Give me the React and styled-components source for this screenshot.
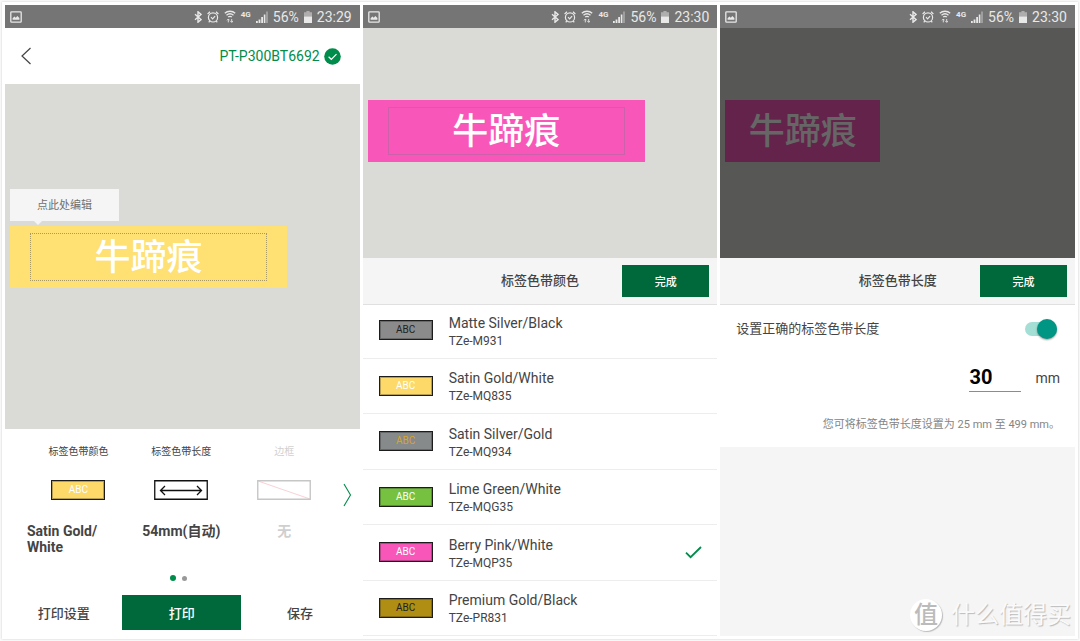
import React, { useState } from 'react';
import styled, { createGlobalStyle, css } from 'styled-components';

const colors = {
  green: '#00693c',
  accent: '#008c4a',
  teal: '#009683',
  canvas: '#dadbd6',
  surface: '#f5f5f5',
  text: '#444',
};

const GlobalStyle = createGlobalStyle`
  *,
  *::before,
  *::after {
    box-sizing: border-box;
  }

  body {
    margin: 0;
    background: #fafafa;
    color: ${colors.text};
    font-family: Roboto, 'Noto Sans CJK SC', sans-serif;
    font-size: 14px;
  }

  button,
  input {
    margin: 0;
    padding: 0;
    border: 0;
    border-radius: 0;
    background: none;
    color: inherit;
    font: inherit;
  }

  button {
    cursor: pointer;
  }

  svg {
    display: block;
    flex: none;
  }
`;

const Page = styled.main`
  display: flex;
  min-height: 100vh;
  padding: 2px;
`;

const Frame = styled.div`
  position: relative;
  display: grid;
  flex: 1;
  grid-template-columns: repeat(3, minmax(0, 1fr));
  gap: 3px;
  padding: 3px;
  background: #fff;
  box-shadow: 0 0 2px #ccc;
`;

const Screen = styled.section`
  display: flex;
  flex-direction: column;
  background: ${props => (props.$muted ? colors.surface : '#fff')};
`;

/* Status bar */

const StatusRow = styled.header`
  display: flex;
  align-items: center;
  justify-content: space-between;
  height: 23px;
  padding: 0 8px 0 5px;
  background: #757575;
  color: #e8e8e8;
`;

const StatusGroup = styled.div`
  display: flex;
  align-items: center;
  gap: 5px;
  line-height: 22px;
`;

const Network = styled.span`
  align-self: flex-start;
  font-size: 8px;
  font-weight: 700;
  line-height: 18px;
`;

const StatusBar = ({ time }) => (
  <StatusRow>
    <svg width="12" height="12" viewBox="0 0 12 12" fill="none" stroke="currentColor">
      <rect x="0.8" y="0.8" width="10.4" height="10.4" rx="0.8" strokeWidth="1.3" />
      <path d="M2.6 8.8V7.2L4.4 5.4l1.4 1.3 1.5-1.7 2.1 2v1.8z" fill="currentColor" stroke="none" />
    </svg>
    <StatusGroup>
      <svg width="8" height="12" viewBox="0 0 8 12" fill="none" stroke="currentColor" strokeWidth="1.4">
        <path d="M1 3.2l6 5.4L4 11.2V0.8l3 2.6L1 8.8" />
      </svg>
      <svg width="12" height="12" viewBox="0 0 12 12" fill="none" stroke="currentColor" strokeWidth="1.2">
        <circle cx="6" cy="6.4" r="4.6" />
        <path d="M4 6.2l1.6 1.6 2.5-2.6M0.6 3L3 0.8M11.4 3L9 0.8M2.8 9.8L1.8 11.4M9.2 9.8l1 1.6" />
      </svg>
      <svg width="12" height="13" viewBox="1 0 12 13" fill="none" stroke="currentColor" strokeWidth="1.3">
        <path d="M1.8 3.2C4.6 0.6 9.4 0.6 12.2 3.2M3.5 5.2c2-1.7 5-1.7 7 0M5.2 7.1c1.1-0.9 2.5-0.9 3.6 0" />
        <path d="M5.3 12.4V9.2M4 10.3l1.3-1.3M8.7 9v3.2M10 11.1l-1.3 1.3M7.4 11.1l1.3 1.3M5.3 9l1.2 1.3" strokeWidth="0.9" />
      </svg>
      <Network>4G</Network>
      <svg width="12" height="12" viewBox="0 0 12 12" fill="currentColor">
        <path d="M0 10h1.8v2H0zM2.6 8.4h1.8V12H2.6zM5.2 6H7v6H5.2zM7.8 3.4h1.6V12H7.8z" />
        <path d="M10.2 0.6h1.6V12h-1.6z" opacity="0.45" />
      </svg>
      <span>56%</span>
      <svg width="8" height="12" viewBox="0 0 8 12" fill="currentColor">
        <path d="M2.4 0h3.2v1.2H8V5.4H0V1.2h2.4z" opacity="0.5" />
        <path d="M0 5.4h8V12H0z" />
      </svg>
      <span>{time}</span>
    </StatusGroup>
  </StatusRow>
);

/* Label preview */

const Canvas = styled.div`
  position: relative;
  display: flex;
  padding: 0 5px;
  background: ${colors.canvas};

  ${props =>
    props.$grow
      ? css`
          flex: 1;
          align-items: center;
        `
      : css`
          height: 230px;
          padding-top: 72px;
        `}

  ${props =>
    props.$dimmed &&
    css`
      &::after {
        content: '';
        position: absolute;
        inset: 0;
        background: rgba(0, 0, 0, 0.6);
      }
    `}
`;

const Tape = styled.div`
  position: relative;
  width: ${props => (props.$short ? 155 : 277)}px;
  height: 62px;
  padding: 7px 20px;
  background: ${props => props.$color};
`;

const TapeText = styled.div`
  height: 48px;
  border: 1px ${props => props.$outline};
  color: #fff;
  font-size: 36px;
  font-weight: 500;
  line-height: 48px;
  text-align: center;
  white-space: nowrap;
`;

const EditHint = styled.div`
  position: absolute;
  bottom: 100%;
  left: 0;
  width: 109px;
  height: 32px;
  margin-bottom: 5px;
  background: ${colors.surface};
  color: #707070;
  font-size: 11px;
  line-height: 34px;
  text-align: center;

  &::after {
    content: '';
    position: absolute;
    top: 100%;
    left: 24px;
    border: 4px solid transparent;
    border-top-color: ${colors.surface};
    border-bottom: 0;
  }
`;

/* Editor screen */

const EditorHeader = styled.div`
  display: flex;
  align-items: center;
  justify-content: space-between;
  height: 56px;
  padding: 0 19px 0 15px;
`;

const Printer = styled.div`
  display: flex;
  align-items: center;
  gap: 4px;
  color: ${colors.accent};
`;

const Controls = styled.div`
  display: flex;
  flex-direction: column;
  padding: 16px 0 6px;
`;

const Carousel = styled.div`
  display: flex;
  padding: 0 8px 0 22px;
`;

const Option = styled.button`
  display: flex;
  flex: 1;
  flex-direction: column;
  align-items: center;
  opacity: ${props => (props.disabled ? 0.25 : 1)};
`;

const OptionLabel = styled.span`
  margin-bottom: 21px;
  font-size: 10px;
  line-height: 14px;
`;

const OptionValue = styled.span`
  align-self: stretch;
  min-height: 32px;
  margin-top: 23px;
  font-weight: 700;
  line-height: 16px;
  text-align: ${props => (props.$left ? 'left' : 'center')};
`;

const NextButton = styled.button`
  display: flex;
  flex: none;
  align-items: center;
  justify-content: flex-end;
  width: 16px;
  height: 100px;
`;

const Swatch = styled.span`
  flex: none;
  width: 54px;
  border: 1px solid #1c1c1c;
  outline: 1px solid rgba(28, 28, 28, 0.3);
  outline-offset: -2px;
  background: ${props => props.$background};
  color: ${props => props.$color};
  font-size: 10px;
  line-height: 18px;
  text-align: center;
`;

const Dots = styled.div`
  display: flex;
  align-items: center;
  justify-content: center;
  gap: 6px;
  height: 6px;
  margin: 20px 0 14px;
  padding-right: 8px;
`;

const Dot = styled.span`
  width: ${props => (props.$active ? 6 : 5)}px;
  height: ${props => (props.$active ? 6 : 5)}px;
  border-radius: 50%;
  background: ${props => (props.$active ? colors.accent : '#999')};
`;

const Actions = styled.div`
  display: grid;
  grid-template-columns: 1fr 119px 1fr;
  padding-right: 1px;
`;

const ActionButton = styled.button`
  height: 35px;
  font-size: 13px;
  font-weight: 500;
  ${props =>
    props.$primary &&
    css`
      background: ${colors.green};
      color: #fff;
    `}
`;

const EditorScreen = () => (
  <Screen>
    <StatusBar time="23:29" />
    <EditorHeader>
      <button type="button" aria-label="返回">
        <svg width="12" height="18" viewBox="0 0 12 18" fill="none" stroke="#444" strokeWidth="1.2">
          <path d="M10.5 1L2 9l8.5 8" />
        </svg>
      </button>
      <Printer>
        <span>PT-P300BT6692</span>
        <svg width="17" height="17" viewBox="0 0 17 17" fill="none">
          <circle cx="8.5" cy="8.5" r="8.3" fill={colors.accent} />
          <path d="M4.6 8.7l2.7 2.6 5.2-5.2" stroke="#fff" strokeWidth="1.2" />
        </svg>
      </Printer>
    </EditorHeader>
    <Canvas $grow>
      <Tape $color="#ffe072">
        <EditHint>点此处编辑</EditHint>
        <TapeText $outline="dotted #a89a66">牛蹄痕</TapeText>
      </Tape>
    </Canvas>
    <Controls>
      <Carousel>
        <Option type="button">
          <OptionLabel>标签色带颜色</OptionLabel>
          <Swatch $background="#fcd968" $color="#fff">
            ABC
          </Swatch>
          <OptionValue $left>
            Satin Gold/
            <br />
            White
          </OptionValue>
        </Option>
        <Option type="button">
          <OptionLabel>标签色带长度</OptionLabel>
          <svg width="54" height="20" viewBox="0 0 54 20" fill="none" stroke="#111">
            <path d="M0.75 0.75h52.5v18.5H0.75z" strokeWidth="1.3" />
            <path d="M6.5 10.5h41M11 6l-4.5 4.5L11 15M43 6l4.5 4.5L43 15" strokeWidth="1.3" />
          </svg>
          <OptionValue>54mm(自动)</OptionValue>
        </Option>
        <Option type="button" disabled>
          <OptionLabel>边框</OptionLabel>
          <svg width="54" height="20" viewBox="0 0 54 20" fill="none">
            <path d="M1 1l52 18" stroke="#f04a5a" />
            <path d="M0.75 0.75h52.5v18.5H0.75z" stroke="#222" strokeWidth="1.4" />
          </svg>
          <OptionValue>无</OptionValue>
        </Option>
        <NextButton type="button" aria-label="下一页">
          <svg width="9" height="24" viewBox="0 0 9 24" fill="none" stroke={colors.accent} strokeWidth="1.1">
            <path d="M1 1l6.5 11L1 23" />
          </svg>
        </NextButton>
      </Carousel>
      <Dots>
        <Dot $active />
        <Dot />
      </Dots>
      <Actions>
        <ActionButton type="button">打印设置</ActionButton>
        <ActionButton type="button" $primary>
          打印
        </ActionButton>
        <ActionButton type="button">保存</ActionButton>
      </Actions>
    </Controls>
  </Screen>
);

/* Sheet header shared by the colour and length screens */

const SheetHeader = styled.div`
  position: relative;
  display: grid;
  grid-template-columns: 1fr auto 1fr;
  align-items: center;
  height: 47px;
  padding: 0 8px;
  border-bottom: 1px solid #e0e0e0;
  background: ${colors.surface};
`;

const SheetTitle = styled.h2`
  grid-column: 2;
  margin: 0;
  font-size: 13px;
  font-weight: 500;
  line-height: 20px;
`;

const DoneButton = styled.button`
  justify-self: end;
  width: 87px;
  height: 32px;
  background: ${colors.green};
  color: #fff;
  font-size: 11px;
  font-weight: 500;
`;

const Sheet = ({ title }) => (
  <SheetHeader>
    <SheetTitle>{title}</SheetTitle>
    <DoneButton type="button">完成</DoneButton>
  </SheetHeader>
);

/* Colour screen */

const tapes = [
  { code: 'TZe-M931', name: 'Matte Silver/Black', background: '#8b8b8b', color: '#222' },
  { code: 'TZe-MQ835', name: 'Satin Gold/White', background: '#fcd968', color: '#fff' },
  { code: 'TZe-MQ934', name: 'Satin Silver/Gold', background: '#868a8a', color: '#d9a520' },
  { code: 'TZe-MQG35', name: 'Lime Green/White', background: '#76c140', color: '#fff' },
  { code: 'TZe-MQP35', name: 'Berry Pink/White', background: '#f857b9', color: '#fff' },
  { code: 'TZe-PR831', name: 'Premium Gold/Black', background: '#b08d13', color: '#222' },
];

const TapeList = styled.div`
  display: flex;
  flex: 1;
  flex-direction: column;
  margin-top: -2px;
`;

const TapeRow = styled.label`
  display: flex;
  flex: 1;
  align-items: center;
  padding: 0 15px 0 16px;
  border-bottom: 1px solid #ededed;
  cursor: pointer;
`;

const HiddenRadio = styled.input`
  position: absolute;
  opacity: 0;
  pointer-events: none;
`;

const TapeInfo = styled.span`
  display: flex;
  flex: 1;
  flex-direction: column;
  margin-left: 16px;
  padding-top: 3px;
  line-height: 18px;
`;

const TapeCode = styled.span`
  font-size: 12px;
  line-height: 18px;
`;

const ColorScreen = () => {
  const [selected, setSelected] = useState('TZe-MQP35');
  const current = tapes.find(tape => tape.code === selected);

  return (
    <Screen>
      <StatusBar time="23:30" />
      <Canvas>
        <Tape $color={current.background}>
          <TapeText $outline="solid rgba(140, 110, 150, 0.4)">牛蹄痕</TapeText>
        </Tape>
      </Canvas>
      <Sheet title="标签色带颜色" />
      <TapeList>
        {tapes.map(tape => (
          <TapeRow key={tape.code}>
            <HiddenRadio
              type="radio"
              name="tape"
              value={tape.code}
              checked={tape.code === selected}
              onChange={() => setSelected(tape.code)}
            />
            <Swatch $background={tape.background} $color={tape.color}>
              ABC
            </Swatch>
            <TapeInfo>
              <span>{tape.name}</span>
              <TapeCode>{tape.code}</TapeCode>
            </TapeInfo>
            {tape.code === selected && (
              <svg width="17" height="13" viewBox="0 0 17 13" fill="none" stroke={colors.accent} strokeWidth="1.8">
                <path d="M1 6.6l4.6 4.6L16 1" />
              </svg>
            )}
          </TapeRow>
        ))}
      </TapeList>
    </Screen>
  );
};

/* Length screen */

const LengthForm = styled.div`
  display: flex;
  flex-direction: column;
  padding: 13px 15px 12px 16px;
  background: #fff;
`;

const ToggleRow = styled.label`
  display: flex;
  align-items: center;
  justify-content: space-between;
  padding-right: 3px;
  font-size: 13px;
  line-height: 22px;
  cursor: pointer;
`;

const Toggle = styled.input`
  appearance: none;
  display: flex;
  align-items: center;
  width: 32px;
  height: 14px;
  border-radius: 7px;
  background: #c4c4c4;
  cursor: pointer;

  &::before {
    content: '';
    width: 20px;
    height: 20px;
    border-radius: 50%;
    background: #fafafa;
    box-shadow: 0 1px 2px rgba(0, 0, 0, 0.4);
  }

  &:checked {
    justify-content: flex-end;
    background: #a3dfd5;
  }

  &:checked::before {
    background: ${colors.teal};
  }
`;

const LengthField = styled.label`
  display: flex;
  align-items: center;
  justify-content: flex-end;
  gap: 14px;
  margin-top: 21px;
  line-height: 30px;
`;

const LengthInput = styled.input`
  width: 52px;
  height: 30px;
  border-bottom: 1px solid #8c8c8c;
  color: #000;
  font-size: 20px;
  font-weight: 700;
`;

const Unit = styled.span`
  padding-top: 2px;
`;

const Hint = styled.p`
  margin: 22px 0 0;
  color: #858585;
  font-size: 11px;
  line-height: 20px;
  text-align: right;
`;

const LengthScreen = () => {
  const [exact, setExact] = useState(true);
  const [length, setLength] = useState('30');

  return (
    <Screen $muted>
      <StatusBar time="23:30" />
      <Canvas $dimmed>
        <Tape $color="#f857b9" $short>
          <TapeText $outline="solid transparent">牛蹄痕</TapeText>
        </Tape>
      </Canvas>
      <Sheet title="标签色带长度" />
      <LengthForm>
        <ToggleRow>
          <span>设置正确的标签色带长度</span>
          <Toggle type="checkbox" role="switch" checked={exact} onChange={e => setExact(e.target.checked)} />
        </ToggleRow>
        <LengthField>
          <LengthInput
            inputMode="numeric"
            aria-label="标签色带长度"
            value={length}
            onChange={e => setLength(e.target.value)}
          />
          <Unit>mm</Unit>
        </LengthField>
        <Hint>您可将标签色带长度设置为 25 mm 至 499 mm。</Hint>
      </LengthForm>
    </Screen>
  );
};

/* Site mark laid over the bottom corner */

const Watermark = styled.div`
  position: absolute;
  right: 7px;
  bottom: 7px;
  display: flex;
  align-items: center;
  gap: 9px;
  color: #fafafa;
  font-size: 24px;
  line-height: 34px;
  text-shadow: 1px 1px 1px #bbb;
  pointer-events: none;
`;

const WatermarkBadge = styled.span`
  width: 32px;
  height: 32px;
  border-radius: 50%;
  background: #fff;
  box-shadow: 1px 1px 1px #bbb;
  color: #bbb;
  font-weight: 500;
  line-height: 32px;
  text-align: center;
  text-shadow: none;
`;

const App = () => (
  <>
    <GlobalStyle />
    <Page lang="zh-CN">
      <Frame>
        <EditorScreen />
        <ColorScreen />
        <LengthScreen />
        <Watermark>
          <WatermarkBadge>值</WatermarkBadge>
          <span>什么值得买</span>
        </Watermark>
      </Frame>
    </Page>
  </>
);

export default App;
